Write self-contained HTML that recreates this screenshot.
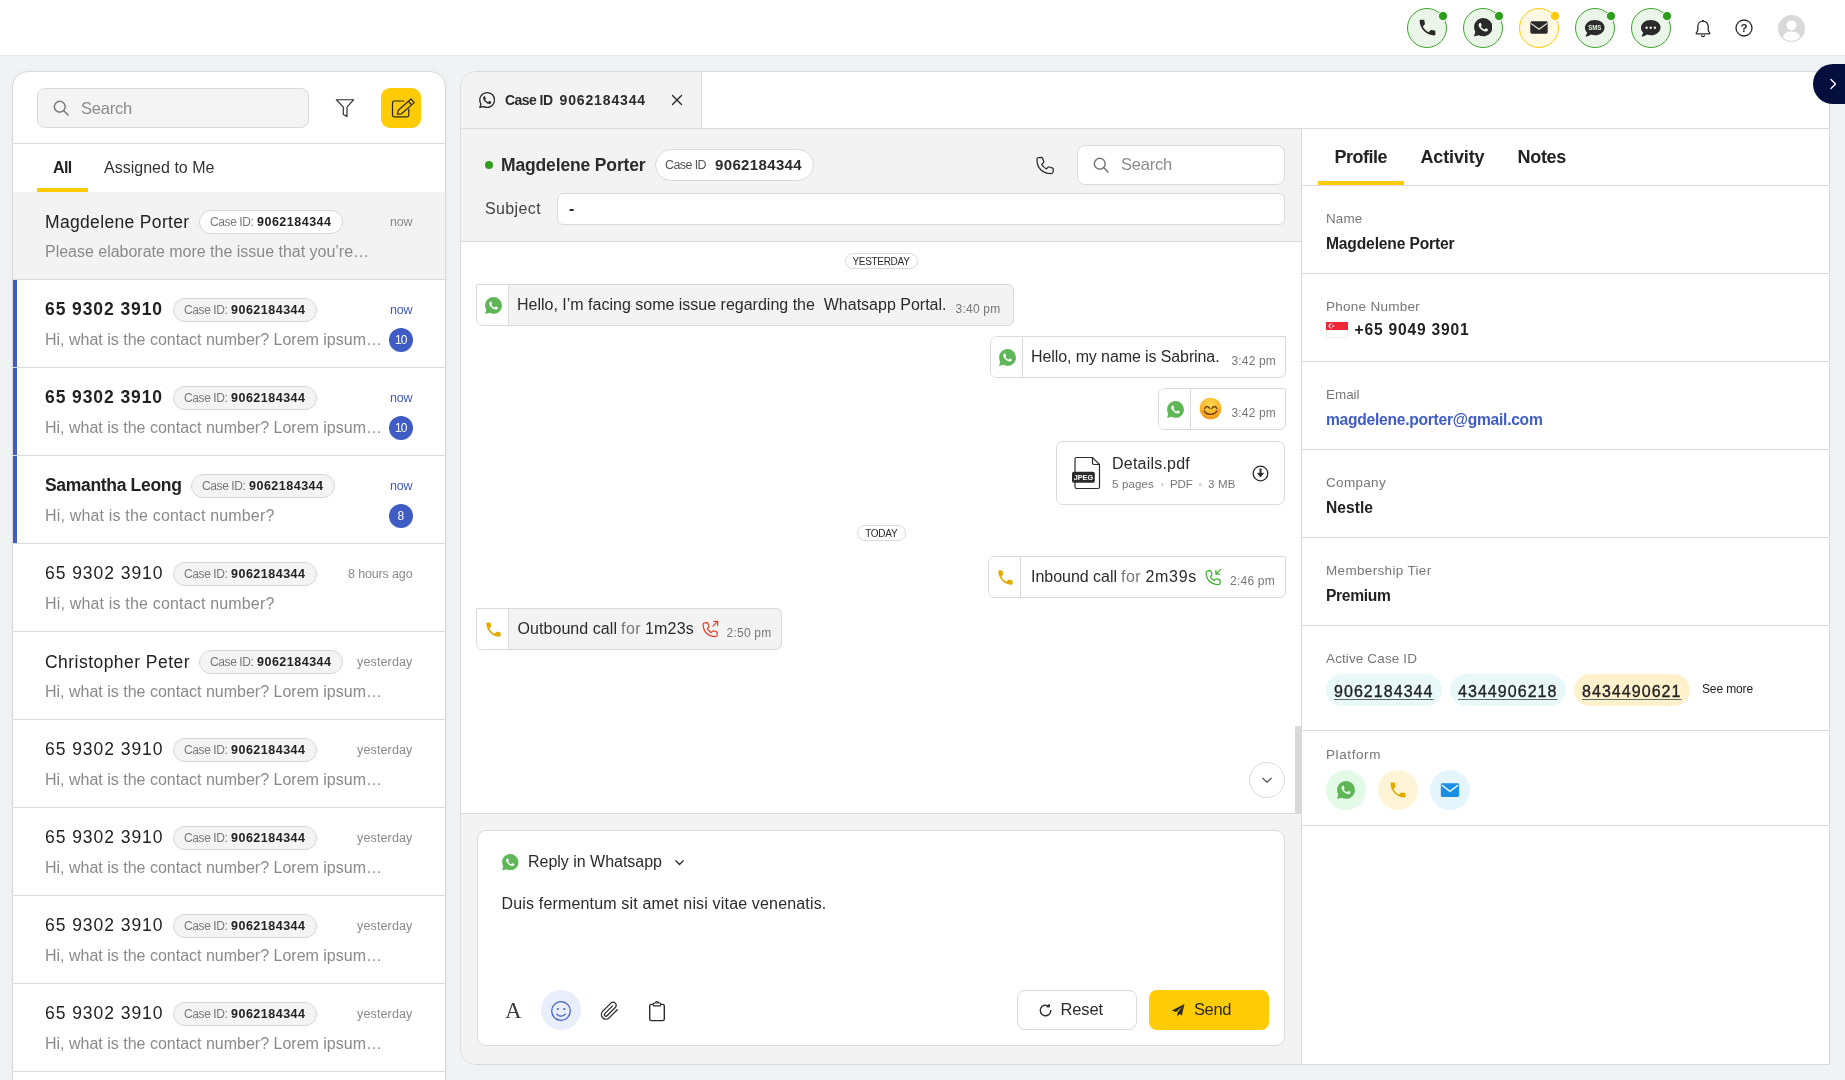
<!DOCTYPE html>
<html lang="en"><head><meta charset="utf-8"><title>Inbox</title><style>
*{box-sizing:border-box;margin:0;padding:0}
html,body{width:1845px;height:1080px;overflow:hidden}
body{background:#f1f2f4;font-family:"Liberation Sans",sans-serif;position:relative;color:#2b2b2b}
#app{position:absolute;left:0;top:0;width:1845px;height:1080px;will-change:transform}
.b{position:absolute;display:block}
.t{position:absolute;white-space:pre;line-height:1;display:block}
</style></head><body>
<div id="app">
<div class="b " style="left:0.00px;top:0.00px;width:1845.00px;height:56.00px;background:#fff;border-bottom:1px solid #e8e9eb"></div>
<div class="b " style="left:1407.00px;top:7.50px;width:40.00px;height:40.00px;border-radius:50%;border:1.2px solid #3aa62b;background:#ebf5e9"></div>
<svg class="b" style="left:1437.00px;top:9.60px;" width="12" height="12" viewBox="0 0 12 12" fill="none"><circle cx="6" cy="6" r="4.600" fill="#2f9e1e" stroke="#fff" stroke-width="1"/></svg>
<svg class="b" style="left:1416.50px;top:17.00px;" width="21" height="21" viewBox="0 0 24 24" fill="none"><path d="M6.62 10.79c1.44 2.83 3.76 5.14 6.59 6.59l2.2-2.2c.27-.27.67-.36 1.02-.24 1.12.37 2.33.57 3.57.57.55 0 1 .45 1 1V20c0 .55-.45 1-1 1-9.39 0-17-7.61-17-17 0-.55.45-1 1-1h3.5c.55 0 1 .45 1 1 0 1.25.2 2.45.57 3.57.11.35.03.74-.25 1.02l-2.2 2.2z" fill="#2a2a2a"/></svg>
<div class="b " style="left:1463.00px;top:7.50px;width:40.00px;height:40.00px;border-radius:50%;border:1.2px solid #3aa62b;background:#ebf5e9"></div>
<svg class="b" style="left:1493.00px;top:9.60px;" width="12" height="12" viewBox="0 0 12 12" fill="none"><circle cx="6" cy="6" r="4.600" fill="#2f9e1e" stroke="#fff" stroke-width="1"/></svg>
<svg class="b" style="left:1473.80px;top:18.00px;" width="18.5" height="18.5" viewBox="0 0 24 24" fill="none"><path d="M.057 24l1.688-6.163A11.867 11.867 0 01.157 11.892C.16 5.335 5.495 0 12.05 0a11.817 11.817 0 018.413 3.488 11.824 11.824 0 013.48 8.414c-.003 6.557-5.338 11.892-11.893 11.892a11.9 11.9 0 01-5.688-1.448L.057 24z" fill="#2a2a2a"/><path d="M17.472 14.382c-.297-.149-1.758-.867-2.03-.967-.273-.099-.471-.148-.67.15-.197.297-.767.966-.94 1.164-.173.199-.347.223-.644.075-.297-.15-1.255-.463-2.39-1.475-.883-.788-1.48-1.761-1.653-2.059-.173-.297-.018-.458.13-.606.134-.133.298-.347.446-.52.149-.174.198-.298.298-.497.099-.198.05-.371-.025-.52-.075-.149-.669-1.612-.916-2.207-.242-.579-.487-.5-.669-.51-.173-.008-.371-.01-.57-.01-.198 0-.52.074-.792.372-.272.297-1.04 1.016-1.04 2.479 0 1.462 1.065 2.875 1.213 3.074.149.198 2.096 3.2 5.077 4.487.709.306 1.262.489 1.694.625.712.227 1.36.195 1.871.118.571-.085 1.758-.719 2.006-1.413.248-.694.248-1.289.173-1.413-.074-.124-.272-.198-.57-.347z" fill="#ebf5e9"/></svg>
<div class="b " style="left:1519.00px;top:7.50px;width:40.00px;height:40.00px;border-radius:50%;border:1.2px solid #ffcb05;background:#fff8e3"></div>
<svg class="b" style="left:1549.00px;top:9.60px;" width="12" height="12" viewBox="0 0 12 12" fill="none"><circle cx="6" cy="6" r="4.600" fill="#ffcb05" stroke="#fff" stroke-width="1"/></svg>
<svg class="b" style="left:1530.00px;top:21.30px;" width="18" height="13" viewBox="0 0 18 13" fill="none"><rect x=".3" y=".3" width="17.400" height="12.400" rx="1.600" fill="#2a2a2a"/><path d="M1.200 2.600L9 8.200l7.800-5.600" stroke="#fff8e3" stroke-width="1.100" stroke-linecap="round" stroke-linejoin="round"/></svg>
<div class="b " style="left:1575.00px;top:7.50px;width:40.00px;height:40.00px;border-radius:50%;border:1.2px solid #3aa62b;background:#ebf5e9"></div>
<svg class="b" style="left:1605.00px;top:9.60px;" width="12" height="12" viewBox="0 0 12 12" fill="none"><circle cx="6" cy="6" r="4.600" fill="#2f9e1e" stroke="#fff" stroke-width="1"/></svg>
<svg class="b" style="left:1583.00px;top:16.50px;" width="23.5" height="23.5" viewBox="0 0 24 24" fill="none"><path d="M12 3C6.5 3 2 6.6 2 11c0 1.9.85 3.65 2.25 5-.5 1.700-1.600 3.200-1.650 3.250-.1.100-.130.270-.070.400.060.140.200.220.350.220 2.500 0 4.400-1.200 5.300-1.900 1.200.400 2.500.650 3.850.650 5.500 0 10-3.600 10-8S17.500 3 12 3z" fill="#2a2a2a"/><text x="12.100" y="13.700" text-anchor="middle" textLength="13.400" lengthAdjust="spacingAndGlyphs" font-family="Liberation Sans, sans-serif" font-weight="700" font-size="7.400" fill="#ebf5e9">SMS</text></svg>
<div class="b " style="left:1631.00px;top:7.50px;width:40.00px;height:40.00px;border-radius:50%;border:1.2px solid #3aa62b;background:#ebf5e9"></div>
<svg class="b" style="left:1661.00px;top:9.60px;" width="12" height="12" viewBox="0 0 12 12" fill="none"><circle cx="6" cy="6" r="4.600" fill="#2f9e1e" stroke="#fff" stroke-width="1"/></svg>
<svg class="b" style="left:1639.00px;top:16.50px;" width="23.5" height="23.5" viewBox="0 0 24 24" fill="none"><path d="M12 3C6.5 3 2 6.6 2 11c0 1.9.85 3.65 2.25 5-.5 1.700-1.600 3.200-1.650 3.250-.1.100-.130.270-.070.400.060.140.200.220.350.220 2.500 0 4.400-1.200 5.300-1.900 1.200.400 2.500.650 3.850.650 5.500 0 10-3.600 10-8S17.500 3 12 3z" fill="#2a2a2a"/><circle cx="7.800" cy="11" r="1.200" fill="#ebf5e9"/><circle cx="12" cy="11" r="1.200" fill="#ebf5e9"/><circle cx="16.200" cy="11" r="1.200" fill="#ebf5e9"/></svg>
<svg class="b" style="left:1693.00px;top:18.70px;" width="20" height="20" viewBox="0 0 20 20" fill="none"><path d="M10 2.2c-3 0-5.2 2.3-5.2 5.3v3.3c0 1.2-.6 2.2-1.5 3.100-.3.3-.1.9.4.9h12.600c.5 0 .7-.6.4-.9-.9-.9-1.500-1.900-1.500-3.100V7.500c0-3-2.200-5.300-5.200-5.300z" stroke="#2a2a2a" stroke-width="1.3" stroke-linejoin="round"/><path d="M8.600 16.600c.2.700.7 1.100 1.400 1.100s1.200-.4 1.400-1.100" stroke="#2a2a2a" stroke-width="1.300" stroke-linecap="round"/><path d="M10 1.300v1" stroke="#2a2a2a" stroke-width="1.300" stroke-linecap="round"/></svg>
<svg class="b" style="left:1734.00px;top:18.00px;" width="20" height="20" viewBox="0 0 20 20" fill="none"><circle cx="10" cy="10" r="8" stroke="#2a2a2a" stroke-width="1.3"/><text x="10" y="14.3" text-anchor="middle" font-family="Liberation Sans, sans-serif" font-size="11.500" font-weight="700" fill="#2a2a2a">?</text></svg>
<svg class="b" style="left:1777.50px;top:14.50px;" width="27" height="27" viewBox="0 0 27 27" fill="none"><defs><clipPath id="av"><circle cx="13.5" cy="13.5" r="13.5"/></clipPath></defs><circle cx="13.5" cy="13.5" r="13.5" fill="#d9d9d9"/><g clip-path="url(#av)" fill="#fff"><circle cx="13.5" cy="10.300" r="4.900"/><ellipse cx="13.5" cy="21.200" rx="8.200" ry="4.600"/></g></svg>
<div class="b " style="left:12.00px;top:71.00px;width:434.00px;height:1030.00px;background:#fff;border:1px solid #dadada;border-radius:16px 16px 0 0;box-shadow:0 0 5px rgba(0,0,0,.04)"></div>
<div class="b " style="left:37.00px;top:88.00px;width:272.00px;height:40.00px;background:#f4f4f4;border:1px solid #dadada;border-radius:8px"></div>
<svg class="b" style="left:51.00px;top:98.00px;" width="20" height="20" viewBox="0 0 24 24" fill="none"><circle cx="10.5" cy="10.5" r="6.5" stroke="#777" stroke-width="1.8"/><path d="M15.3 15.3L20.5 20.5" stroke="#777" stroke-width="1.8" stroke-linecap="round"/></svg>
<span class="t " style="left:81.00px;top:100.00px;font-size:16.50px;font-weight:400;color:#8b8b8b;letter-spacing:-0.214px;">Search</span>
<svg class="b" style="left:335.00px;top:98.00px;" width="20" height="20" viewBox="0 0 20 20" fill="none"><path d="M1.300 1.700h17.400L12 9.200v9.300l-3.700-2V9.200z" stroke="#2a2a2a" stroke-width="1.150" stroke-linejoin="round"/></svg>
<div class="b " style="left:381.00px;top:88.00px;width:40.00px;height:40.00px;background:#ffcb05;border-radius:9px"></div>
<svg class="b" style="left:389.00px;top:96.50px;" width="27" height="24" viewBox="0 0 27 24" fill="none"><path d="M14.900 4H5.200a1.700 1.700 0 00-1.700 1.700v12.500a1.700 1.700 0 001.700 1.700h12.900a1.700 1.700 0 001.700-1.700V12" stroke="#2a2a2a" stroke-width="1.200" stroke-linecap="round"/><path d="M8.400 17.200L9.300 13.200 22 2 25.200 5.600 12.500 16.800z" stroke="#2a2a2a" stroke-width="1.200" stroke-linejoin="round" fill="#ffcb05"/><path d="M19.600 4.500L22.400 7.700" stroke="#2a2a2a" stroke-width="1.200"/></svg>
<div class="b " style="left:13.00px;top:143.00px;width:432.00px;height:1.00px;background:#dadada"></div>
<span class="t " style="left:53.00px;top:160.00px;font-size:16.00px;font-weight:700;color:#222;letter-spacing:-0.651px;">All</span>
<span class="t " style="left:104.00px;top:160.00px;font-size:16.00px;font-weight:400;color:#333;letter-spacing:0.016px;">Assigned to Me</span>
<div class="b " style="left:37.00px;top:188.00px;width:51.00px;height:4.00px;background:#ffcb05"></div>
<div class="b " style="left:13.00px;top:192.00px;width:432.00px;height:87.00px;background:#f3f3f3"></div>
<div class="b " style="left:13.00px;top:279.00px;width:432.00px;height:1.00px;background:#dadada"></div>
<span class="t " style="left:45.00px;top:214.00px;font-size:17.50px;font-weight:400;color:#222;letter-spacing:0.336px;">Magdelene Porter</span>
<div class="b " style="left:199.00px;top:210.00px;width:144.00px;height:24.00px;border-radius:12px;border:1px solid #d6d6d6;background:#fff"></div>
<span class="t " style="left:210.00px;top:216.00px;font-size:12.00px;font-weight:400;color:#777;letter-spacing:-0.398px;">Case ID:</span>
<span class="t " style="left:257.00px;top:216.00px;font-size:12.50px;font-weight:700;color:#222;letter-spacing:0.497px;">9062184344</span>
<span class="t " style="left:390.00px;top:216.00px;font-size:12.50px;font-weight:400;color:#8a8a8a;letter-spacing:-0.146px;">now</span>
<span class="t " style="left:45.00px;top:244.00px;font-size:16.00px;font-weight:400;color:#8a8a8a;letter-spacing:-0.014px;">Please elaborate more the issue that you’re…</span>
<div class="b " style="left:13.00px;top:367.00px;width:432.00px;height:1.00px;background:#dadada"></div>
<div class="b " style="left:13.00px;top:280.00px;width:4.00px;height:87.00px;background:#3f5bc4"></div>
<span class="t " style="left:45.00px;top:301.00px;font-size:17.50px;font-weight:700;color:#222;letter-spacing:0.911px;">65 9302 3910</span>
<div class="b " style="left:173.00px;top:298.00px;width:144.00px;height:24.00px;border-radius:12px;border:1px solid #d6d6d6;background:#f4f4f4"></div>
<span class="t " style="left:184.00px;top:304.00px;font-size:12.00px;font-weight:400;color:#777;letter-spacing:-0.398px;">Case ID:</span>
<span class="t " style="left:231.00px;top:304.00px;font-size:12.50px;font-weight:700;color:#222;letter-spacing:0.497px;">9062184344</span>
<span class="t " style="left:390.00px;top:304.00px;font-size:12.50px;font-weight:400;color:#3f5bc4;letter-spacing:-0.146px;">now</span>
<span class="t " style="left:45.00px;top:332.00px;font-size:16.00px;font-weight:400;color:#8a8a8a;letter-spacing:-0.001px;">Hi, what is the contact number? Lorem ipsum…</span>
<div class="b " style="left:389.00px;top:328.00px;width:24.00px;height:24.00px;border-radius:50%;background:#3f5bc4"></div>
<span class="t " style="left:394.95px;top:334.00px;font-size:12.00px;font-weight:400;color:#fff;letter-spacing:-0.930px;">10</span>
<div class="b " style="left:13.00px;top:455.00px;width:432.00px;height:1.00px;background:#dadada"></div>
<div class="b " style="left:13.00px;top:368.00px;width:4.00px;height:87.00px;background:#3f5bc4"></div>
<span class="t " style="left:45.00px;top:389.00px;font-size:17.50px;font-weight:700;color:#222;letter-spacing:0.911px;">65 9302 3910</span>
<div class="b " style="left:173.00px;top:386.00px;width:144.00px;height:24.00px;border-radius:12px;border:1px solid #d6d6d6;background:#f4f4f4"></div>
<span class="t " style="left:184.00px;top:392.00px;font-size:12.00px;font-weight:400;color:#777;letter-spacing:-0.398px;">Case ID:</span>
<span class="t " style="left:231.00px;top:392.00px;font-size:12.50px;font-weight:700;color:#222;letter-spacing:0.497px;">9062184344</span>
<span class="t " style="left:390.00px;top:392.00px;font-size:12.50px;font-weight:400;color:#3f5bc4;letter-spacing:-0.146px;">now</span>
<span class="t " style="left:45.00px;top:420.00px;font-size:16.00px;font-weight:400;color:#8a8a8a;letter-spacing:-0.001px;">Hi, what is the contact number? Lorem ipsum…</span>
<div class="b " style="left:389.00px;top:416.00px;width:24.00px;height:24.00px;border-radius:50%;background:#3f5bc4"></div>
<span class="t " style="left:394.95px;top:422.00px;font-size:12.00px;font-weight:400;color:#fff;letter-spacing:-0.930px;">10</span>
<div class="b " style="left:13.00px;top:543.00px;width:432.00px;height:1.00px;background:#dadada"></div>
<div class="b " style="left:13.00px;top:456.00px;width:4.00px;height:87.00px;background:#3f5bc4"></div>
<span class="t " style="left:45.00px;top:477.00px;font-size:17.50px;font-weight:700;color:#222;letter-spacing:-0.321px;">Samantha Leong</span>
<div class="b " style="left:191.00px;top:474.00px;width:144.00px;height:24.00px;border-radius:12px;border:1px solid #d6d6d6;background:#f4f4f4"></div>
<span class="t " style="left:202.00px;top:480.00px;font-size:12.00px;font-weight:400;color:#777;letter-spacing:-0.398px;">Case ID:</span>
<span class="t " style="left:249.00px;top:480.00px;font-size:12.50px;font-weight:700;color:#222;letter-spacing:0.497px;">9062184344</span>
<span class="t " style="left:390.00px;top:480.00px;font-size:12.50px;font-weight:400;color:#3f5bc4;letter-spacing:-0.146px;">now</span>
<span class="t " style="left:45.00px;top:508.00px;font-size:16.00px;font-weight:400;color:#8a8a8a;letter-spacing:0.174px;">Hi, what is the contact number?</span>
<div class="b " style="left:389.00px;top:504.00px;width:24.00px;height:24.00px;border-radius:50%;background:#3f5bc4"></div>
<span class="t " style="left:397.45px;top:510.00px;font-size:12.00px;font-weight:400;color:#fff;letter-spacing:-0.188px;">8</span>
<div class="b " style="left:13.00px;top:631.00px;width:432.00px;height:1.00px;background:#dadada"></div>
<span class="t " style="left:45.00px;top:565.00px;font-size:17.50px;font-weight:400;color:#222;letter-spacing:0.953px;">65 9302 3910</span>
<div class="b " style="left:173.00px;top:562.00px;width:144.00px;height:24.00px;border-radius:12px;border:1px solid #d6d6d6;background:#f4f4f4"></div>
<span class="t " style="left:184.00px;top:568.00px;font-size:12.00px;font-weight:400;color:#777;letter-spacing:-0.398px;">Case ID:</span>
<span class="t " style="left:231.00px;top:568.00px;font-size:12.50px;font-weight:700;color:#222;letter-spacing:0.497px;">9062184344</span>
<span class="t " style="left:348.00px;top:568.00px;font-size:12.50px;font-weight:400;color:#8a8a8a;letter-spacing:-0.139px;">8 hours ago</span>
<span class="t " style="left:45.00px;top:596.00px;font-size:16.00px;font-weight:400;color:#8a8a8a;letter-spacing:0.174px;">Hi, what is the contact number?</span>
<div class="b " style="left:13.00px;top:719.00px;width:432.00px;height:1.00px;background:#dadada"></div>
<span class="t " style="left:45.00px;top:654.00px;font-size:17.50px;font-weight:400;color:#222;letter-spacing:0.461px;">Christopher Peter</span>
<div class="b " style="left:199.00px;top:650.00px;width:144.00px;height:24.00px;border-radius:12px;border:1px solid #d6d6d6;background:#f4f4f4"></div>
<span class="t " style="left:210.00px;top:656.00px;font-size:12.00px;font-weight:400;color:#777;letter-spacing:-0.398px;">Case ID:</span>
<span class="t " style="left:257.00px;top:656.00px;font-size:12.50px;font-weight:700;color:#222;letter-spacing:0.497px;">9062184344</span>
<span class="t " style="left:357.00px;top:656.00px;font-size:12.50px;font-weight:400;color:#8a8a8a;letter-spacing:0.144px;">yesterday</span>
<span class="t " style="left:45.00px;top:684.00px;font-size:16.00px;font-weight:400;color:#8a8a8a;letter-spacing:-0.001px;">Hi, what is the contact number? Lorem ipsum…</span>
<div class="b " style="left:13.00px;top:807.00px;width:432.00px;height:1.00px;background:#dadada"></div>
<span class="t " style="left:45.00px;top:741.00px;font-size:17.50px;font-weight:400;color:#222;letter-spacing:0.953px;">65 9302 3910</span>
<div class="b " style="left:173.00px;top:738.00px;width:144.00px;height:24.00px;border-radius:12px;border:1px solid #d6d6d6;background:#f4f4f4"></div>
<span class="t " style="left:184.00px;top:744.00px;font-size:12.00px;font-weight:400;color:#777;letter-spacing:-0.398px;">Case ID:</span>
<span class="t " style="left:231.00px;top:744.00px;font-size:12.50px;font-weight:700;color:#222;letter-spacing:0.497px;">9062184344</span>
<span class="t " style="left:357.00px;top:744.00px;font-size:12.50px;font-weight:400;color:#8a8a8a;letter-spacing:0.144px;">yesterday</span>
<span class="t " style="left:45.00px;top:772.00px;font-size:16.00px;font-weight:400;color:#8a8a8a;letter-spacing:-0.001px;">Hi, what is the contact number? Lorem ipsum…</span>
<div class="b " style="left:13.00px;top:895.00px;width:432.00px;height:1.00px;background:#dadada"></div>
<span class="t " style="left:45.00px;top:829.00px;font-size:17.50px;font-weight:400;color:#222;letter-spacing:0.953px;">65 9302 3910</span>
<div class="b " style="left:173.00px;top:826.00px;width:144.00px;height:24.00px;border-radius:12px;border:1px solid #d6d6d6;background:#f4f4f4"></div>
<span class="t " style="left:184.00px;top:832.00px;font-size:12.00px;font-weight:400;color:#777;letter-spacing:-0.398px;">Case ID:</span>
<span class="t " style="left:231.00px;top:832.00px;font-size:12.50px;font-weight:700;color:#222;letter-spacing:0.497px;">9062184344</span>
<span class="t " style="left:357.00px;top:832.00px;font-size:12.50px;font-weight:400;color:#8a8a8a;letter-spacing:0.144px;">yesterday</span>
<span class="t " style="left:45.00px;top:860.00px;font-size:16.00px;font-weight:400;color:#8a8a8a;letter-spacing:-0.001px;">Hi, what is the contact number? Lorem ipsum…</span>
<div class="b " style="left:13.00px;top:983.00px;width:432.00px;height:1.00px;background:#dadada"></div>
<span class="t " style="left:45.00px;top:917.00px;font-size:17.50px;font-weight:400;color:#222;letter-spacing:0.953px;">65 9302 3910</span>
<div class="b " style="left:173.00px;top:914.00px;width:144.00px;height:24.00px;border-radius:12px;border:1px solid #d6d6d6;background:#f4f4f4"></div>
<span class="t " style="left:184.00px;top:920.00px;font-size:12.00px;font-weight:400;color:#777;letter-spacing:-0.398px;">Case ID:</span>
<span class="t " style="left:231.00px;top:920.00px;font-size:12.50px;font-weight:700;color:#222;letter-spacing:0.497px;">9062184344</span>
<span class="t " style="left:357.00px;top:920.00px;font-size:12.50px;font-weight:400;color:#8a8a8a;letter-spacing:0.144px;">yesterday</span>
<span class="t " style="left:45.00px;top:948.00px;font-size:16.00px;font-weight:400;color:#8a8a8a;letter-spacing:-0.001px;">Hi, what is the contact number? Lorem ipsum…</span>
<div class="b " style="left:13.00px;top:1071.00px;width:432.00px;height:1.00px;background:#dadada"></div>
<span class="t " style="left:45.00px;top:1005.00px;font-size:17.50px;font-weight:400;color:#222;letter-spacing:0.953px;">65 9302 3910</span>
<div class="b " style="left:173.00px;top:1002.00px;width:144.00px;height:24.00px;border-radius:12px;border:1px solid #d6d6d6;background:#f4f4f4"></div>
<span class="t " style="left:184.00px;top:1008.00px;font-size:12.00px;font-weight:400;color:#777;letter-spacing:-0.398px;">Case ID:</span>
<span class="t " style="left:231.00px;top:1008.00px;font-size:12.50px;font-weight:700;color:#222;letter-spacing:0.497px;">9062184344</span>
<span class="t " style="left:357.00px;top:1008.00px;font-size:12.50px;font-weight:400;color:#8a8a8a;letter-spacing:0.144px;">yesterday</span>
<span class="t " style="left:45.00px;top:1036.00px;font-size:16.00px;font-weight:400;color:#8a8a8a;letter-spacing:-0.001px;">Hi, what is the contact number? Lorem ipsum…</span>
<div class="b " style="left:460.00px;top:71.00px;width:1370.00px;height:994.00px;background:#fff;border:1px solid #dadada;border-radius:16px 0 0 16px;overflow:hidden"><div class="b " style="left:0.00px;top:0.00px;width:241.00px;height:56.00px;background:#f3f3f3;border-right:1px solid #dadada"></div><div class="b " style="left:0.00px;top:56.00px;width:1368.00px;height:1.00px;background:#dadada"></div><div class="b " style="left:0.00px;top:57.00px;width:840.00px;height:112.00px;background:#f3f3f3"></div><div class="b " style="left:0.00px;top:169.00px;width:840.00px;height:1.00px;background:#dadada"></div><div class="b " style="left:0.00px;top:741.00px;width:840.00px;height:1.00px;background:#dadada"></div><div class="b " style="left:0.00px;top:742.00px;width:840.00px;height:260.00px;background:#f3f3f3"></div><div class="b " style="left:840.00px;top:57.00px;width:1.00px;height:940.00px;background:#dadada"></div></div>
<svg class="b" style="left:479.00px;top:92.00px;" width="16.3" height="16.3" viewBox="0 0 24 24" fill="none"><path fill-rule="evenodd" d="M.057 24l1.688-6.163A11.867 11.867 0 01.157 11.892C.16 5.335 5.495 0 12.05 0a11.817 11.817 0 018.413 3.488 11.824 11.824 0 013.48 8.414c-.003 6.557-5.338 11.892-11.893 11.892a11.9 11.9 0 01-5.688-1.448L.057 24z M12.051 21.785h-.004a9.87 9.87 0 01-5.031-1.378l-.361-.214-3.741.982.998-3.648-.235-.374a9.86 9.86 0 01-1.51-5.26c.001-5.45 4.436-9.884 9.888-9.884 2.64 0 5.122 1.03 6.988 2.898a9.825 9.825 0 012.893 6.994c-.003 5.45-4.437 9.884-9.885 9.884z" fill="#2b2b2b"/><path d="M17.472 14.382c-.297-.149-1.758-.867-2.03-.967-.273-.099-.471-.148-.67.15-.197.297-.767.966-.94 1.164-.173.199-.347.223-.644.075-.297-.15-1.255-.463-2.39-1.475-.883-.788-1.48-1.761-1.653-2.059-.173-.297-.018-.458.13-.606.134-.133.298-.347.446-.52.149-.174.198-.298.298-.497.099-.198.05-.371-.025-.52-.075-.149-.669-1.612-.916-2.207-.242-.579-.487-.5-.669-.51-.173-.008-.371-.01-.57-.01-.198 0-.52.074-.792.372-.272.297-1.04 1.016-1.04 2.479 0 1.462 1.065 2.875 1.213 3.074.149.198 2.096 3.2 5.077 4.487.709.306 1.262.489 1.694.625.712.227 1.36.195 1.871.118.571-.085 1.758-.719 2.006-1.413.248-.694.248-1.289.173-1.413-.074-.124-.272-.198-.57-.347z" fill="#2b2b2b"/></svg>
<span class="t " style="left:505.00px;top:93.00px;font-size:14.00px;font-weight:700;color:#2b2b2b;letter-spacing:-0.551px;">Case ID</span>
<span class="t " style="left:559.50px;top:93.00px;font-size:14.00px;font-weight:700;color:#2b2b2b;letter-spacing:0.863px;">9062184344</span>
<svg class="b" style="left:671.00px;top:94.00px;" width="12" height="12" viewBox="0 0 12 12" fill="none"><path d="M1.500 1.500l9 9M10.500 1.500l-9 9" stroke="#2b2b2b" stroke-width="1.400" stroke-linecap="round"/></svg>
<div class="b " style="left:485.00px;top:161.00px;width:8.00px;height:8.00px;border-radius:50%;background:#2f9e1e"></div>
<span class="t " style="left:501.00px;top:157.00px;font-size:17.50px;font-weight:700;color:#2b2b2b;letter-spacing:-0.147px;">Magdelene Porter</span>
<div class="b " style="left:654.50px;top:149.00px;width:159.00px;height:32.00px;border-radius:16px;border:1px solid #dadada;background:#fff"></div>
<span class="t " style="left:665.00px;top:159.00px;font-size:12.50px;font-weight:400;color:#555;letter-spacing:-0.594px;">Case ID</span>
<span class="t " style="left:715.00px;top:157.00px;font-size:15.00px;font-weight:700;color:#2b2b2b;letter-spacing:0.356px;">9062184344</span>
<svg class="b" style="left:1034.00px;top:154.00px;" width="22" height="22" viewBox="0 0 20 20" fill="none"><path d="M5.200 1.800l2.400-.300c.5 0 .9.200 1.100.700l1.100 3c.2.500 0 1-.3 1.300L8 7.900c.9 1.900 2.300 3.300 4.200 4.200l1.400-1.500c.3-.4.800-.5 1.300-.3l3 1.100c.5.200.7.600.7 1.100l-.3 2.400c-.100.800-.800 1.400-1.600 1.400C8.600 16.300 3.700 11.400 3.700 3.400c0-.8.600-1.500 1.500-1.600z" stroke="#2b2b2b" stroke-width="1.150" stroke-linejoin="round" transform="translate(-1,1.5)"/></svg>
<div class="b " style="left:1077.00px;top:145.00px;width:208.00px;height:40.00px;background:#fff;border:1px solid #dadada;border-radius:8px"></div>
<svg class="b" style="left:1091.00px;top:155.00px;" width="20" height="20" viewBox="0 0 24 24" fill="none"><circle cx="10.5" cy="10.5" r="6.5" stroke="#777" stroke-width="1.8"/><path d="M15.3 15.3L20.5 20.5" stroke="#777" stroke-width="1.8" stroke-linecap="round"/></svg>
<span class="t " style="left:1121.00px;top:156.00px;font-size:16.50px;font-weight:400;color:#8b8b8b;letter-spacing:-0.214px;">Search</span>
<span class="t " style="left:485.00px;top:201.00px;font-size:16.00px;font-weight:400;color:#444;letter-spacing:0.375px;">Subject</span>
<div class="b " style="left:557.00px;top:193.00px;width:728.00px;height:32.00px;background:#fff;border:1px solid #dadada;border-radius:6px"></div>
<span class="t " style="left:569.00px;top:201.00px;font-size:16.00px;font-weight:700;color:#2b2b2b;letter-spacing:0.672px;">-</span>
<div class="b " style="left:844.50px;top:252.50px;width:73.00px;height:16.50px;border-radius:9px;border:1px solid #dadada;background:#fff"></div>
<span class="t " style="left:852.50px;top:257.00px;font-size:10.00px;font-weight:400;color:#2b2b2b;letter-spacing:-0.316px;">YESTERDAY</span>
<div class="b " style="left:857.00px;top:524.50px;width:48.50px;height:16.50px;border-radius:9px;border:1px solid #dadada;background:#fff"></div>
<span class="t " style="left:865.25px;top:529.00px;font-size:10.00px;font-weight:400;color:#2b2b2b;letter-spacing:-0.306px;">TODAY</span>
<div class="b " style="left:476.00px;top:284.00px;width:538.00px;height:42.00px;border:1px solid #dadada;border-radius:1px 6px 6px 7px;background:#f3f3f3;overflow:hidden"><div class="b " style="left:0.00px;top:0.00px;width:32.00px;height:40.00px;background:#fff;border-right:1px solid #dadada"></div></div>
<svg class="b" style="left:484.50px;top:296.50px;" width="17" height="17" viewBox="0 0 24 24" fill="none"><path d="M.057 24l1.688-6.163A11.867 11.867 0 01.157 11.892C.16 5.335 5.495 0 12.05 0a11.817 11.817 0 018.413 3.488 11.824 11.824 0 013.48 8.414c-.003 6.557-5.338 11.892-11.893 11.892a11.9 11.9 0 01-5.688-1.448L.057 24z" fill="#5fb657"/><path d="M17.472 14.382c-.297-.149-1.758-.867-2.03-.967-.273-.099-.471-.148-.67.15-.197.297-.767.966-.94 1.164-.173.199-.347.223-.644.075-.297-.15-1.255-.463-2.39-1.475-.883-.788-1.48-1.761-1.653-2.059-.173-.297-.018-.458.13-.606.134-.133.298-.347.446-.52.149-.174.198-.298.298-.497.099-.198.05-.371-.025-.52-.075-.149-.669-1.612-.916-2.207-.242-.579-.487-.5-.669-.51-.173-.008-.371-.01-.57-.01-.198 0-.52.074-.792.372-.272.297-1.04 1.016-1.04 2.479 0 1.462 1.065 2.875 1.213 3.074.149.198 2.096 3.2 5.077 4.487.709.306 1.262.489 1.694.625.712.227 1.36.195 1.871.118.571-.085 1.758-.719 2.006-1.413.248-.694.248-1.289.173-1.413-.074-.124-.272-.198-.57-.347z" fill="#fff"/></svg>
<span class="t " style="left:517.00px;top:297.00px;font-size:16.00px;font-weight:400;color:#2b2b2b;letter-spacing:-0.001px;">Hello, I’m facing some issue regarding the  Whatsapp Portal.</span>
<span class="t " style="left:955.50px;top:303.00px;font-size:12.00px;font-weight:400;color:#777;letter-spacing:0.234px;">3:40 pm</span>
<div class="b " style="left:990.00px;top:336.00px;width:296.00px;height:42.00px;border:1px solid #dadada;border-radius:7px 0 6px 7px;background:#fff;overflow:hidden"><div class="b " style="left:0.00px;top:0.00px;width:32.00px;height:40.00px;background:#fff;border-right:1px solid #dadada"></div></div>
<svg class="b" style="left:998.50px;top:348.50px;" width="17" height="17" viewBox="0 0 24 24" fill="none"><path d="M.057 24l1.688-6.163A11.867 11.867 0 01.157 11.892C.16 5.335 5.495 0 12.05 0a11.817 11.817 0 018.413 3.488 11.824 11.824 0 013.48 8.414c-.003 6.557-5.338 11.892-11.893 11.892a11.9 11.9 0 01-5.688-1.448L.057 24z" fill="#5fb657"/><path d="M17.472 14.382c-.297-.149-1.758-.867-2.03-.967-.273-.099-.471-.148-.67.15-.197.297-.767.966-.94 1.164-.173.199-.347.223-.644.075-.297-.15-1.255-.463-2.39-1.475-.883-.788-1.48-1.761-1.653-2.059-.173-.297-.018-.458.13-.606.134-.133.298-.347.446-.52.149-.174.198-.298.298-.497.099-.198.05-.371-.025-.52-.075-.149-.669-1.612-.916-2.207-.242-.579-.487-.5-.669-.51-.173-.008-.371-.01-.57-.01-.198 0-.52.074-.792.372-.272.297-1.04 1.016-1.04 2.479 0 1.462 1.065 2.875 1.213 3.074.149.198 2.096 3.2 5.077 4.487.709.306 1.262.489 1.694.625.712.227 1.36.195 1.871.118.571-.085 1.758-.719 2.006-1.413.248-.694.248-1.289.173-1.413-.074-.124-.272-.198-.57-.347z" fill="#fff"/></svg>
<span class="t " style="left:1031.00px;top:349.00px;font-size:16.00px;font-weight:400;color:#2b2b2b;letter-spacing:-0.103px;">Hello, my name is Sabrina.</span>
<span class="t " style="left:1231.50px;top:355.00px;font-size:12.00px;font-weight:400;color:#777;letter-spacing:0.163px;">3:42 pm</span>
<div class="b " style="left:1158.00px;top:388.00px;width:128.00px;height:42.00px;border:1px solid #dadada;border-radius:7px 0 6px 7px;background:#fff;overflow:hidden"><div class="b " style="left:0.00px;top:0.00px;width:32.00px;height:40.00px;background:#fff;border-right:1px solid #dadada"></div></div>
<svg class="b" style="left:1166.50px;top:400.50px;" width="17" height="17" viewBox="0 0 24 24" fill="none"><path d="M.057 24l1.688-6.163A11.867 11.867 0 01.157 11.892C.16 5.335 5.495 0 12.05 0a11.817 11.817 0 018.413 3.488 11.824 11.824 0 013.48 8.414c-.003 6.557-5.338 11.892-11.893 11.892a11.9 11.9 0 01-5.688-1.448L.057 24z" fill="#5fb657"/><path d="M17.472 14.382c-.297-.149-1.758-.867-2.03-.967-.273-.099-.471-.148-.67.15-.197.297-.767.966-.94 1.164-.173.199-.347.223-.644.075-.297-.15-1.255-.463-2.39-1.475-.883-.788-1.48-1.761-1.653-2.059-.173-.297-.018-.458.13-.606.134-.133.298-.347.446-.52.149-.174.198-.298.298-.497.099-.198.05-.371-.025-.52-.075-.149-.669-1.612-.916-2.207-.242-.579-.487-.5-.669-.51-.173-.008-.371-.01-.57-.01-.198 0-.52.074-.792.372-.272.297-1.04 1.016-1.04 2.479 0 1.462 1.065 2.875 1.213 3.074.149.198 2.096 3.2 5.077 4.487.709.306 1.262.489 1.694.625.712.227 1.36.195 1.871.118.571-.085 1.758-.719 2.006-1.413.248-.694.248-1.289.173-1.413-.074-.124-.272-.198-.57-.347z" fill="#fff"/></svg>
<svg class="b" style="left:1199.40px;top:397.10px;" width="23" height="23" viewBox="0 0 23 23" fill="none"><defs><radialGradient id="em" cx="50%" cy="30%" r="75%"><stop offset="0" stop-color="#ffd94d"/><stop offset=".6" stop-color="#fbb42b"/><stop offset="1" stop-color="#ee8d12"/></radialGradient></defs><circle cx="11.500" cy="11.500" r="10.800" fill="url(#em)"/><ellipse cx="5.300" cy="14" rx="2.100" ry="1.300" fill="#f26b3a" opacity=".35"/><ellipse cx="17.700" cy="14" rx="2.100" ry="1.300" fill="#f26b3a" opacity=".35"/><path d="M5.700 11.600c1-2.900 4-2.900 5 0M12.900 11.600c1-2.900 4-2.900 5 0" stroke="#6b3d10" stroke-width="1.400" stroke-linecap="round"/><path d="M5.300 14.100c1.600 4.300 10.800 4.300 12.400 0" stroke="#6b3d10" stroke-width="1.400" stroke-linecap="round"/></svg>
<span class="t " style="left:1231.50px;top:407.00px;font-size:12.00px;font-weight:400;color:#777;letter-spacing:0.163px;">3:42 pm</span>
<div class="b " style="left:1056.00px;top:441.00px;width:229.00px;height:64.00px;border:1px solid #dadada;border-radius:7px;background:#fff"></div>
<svg class="b" style="left:1072.00px;top:456.00px;" width="31" height="34" viewBox="0 0 31 34" fill="none"><path d="M4.500 1.500h16l7 7v22.500a1.500 1.500 0 01-1.500 1.500h-21.500a1.500 1.500 0 01-1.500-1.500v-28a1.500 1.500 0 011.500-1.500z" stroke="#2b2b2b" stroke-width="1.200" fill="#fff"/><path d="M20.500 1.500v5.500a1.500 1.500 0 001.500 1.500h5.500" stroke="#2b2b2b" stroke-width="1.200"/><rect x="0" y="15.800" width="22.800" height="10.900" rx="1.800" fill="#2b2b2b"/><text x="11.400" y="24" text-anchor="middle" textLength="19.500" lengthAdjust="spacingAndGlyphs" font-family="Liberation Sans, sans-serif" font-weight="700" font-size="7.800" fill="#fff">JPEG</text></svg>
<span class="t " style="left:1112.00px;top:456.00px;font-size:16.00px;font-weight:400;color:#2b2b2b;letter-spacing:0.219px;">Details.pdf</span>
<span class="t " style="left:1112.00px;top:479.00px;font-size:11.50px;font-weight:400;color:#777;letter-spacing:0.152px;">5 pages</span>
<span class="t " style="left:1160.70px;top:480.00px;font-size:10.00px;font-weight:400;color:#d0d0d0;">•</span>
<span class="t " style="left:1170.00px;top:479.00px;font-size:11.50px;font-weight:400;color:#777;letter-spacing:-0.167px;">PDF</span>
<span class="t " style="left:1198.50px;top:480.00px;font-size:10.00px;font-weight:400;color:#d0d0d0;">•</span>
<span class="t " style="left:1208.00px;top:479.00px;font-size:11.50px;font-weight:400;color:#777;letter-spacing:0.164px;">3 MB</span>
<svg class="b" style="left:1252.10px;top:464.60px;" width="17" height="17" viewBox="0 0 17 17" fill="none"><circle cx="8.500" cy="8.500" r="7.300" stroke="#2b2b2b" stroke-width="1.300"/><path d="M8.500 4.300v5" stroke="#2b2b2b" stroke-width="1.900" stroke-linecap="round"/><path d="M5.500 8.300h6L8.500 12z" fill="#2b2b2b" stroke="#2b2b2b" stroke-width=".800" stroke-linejoin="round"/></svg>
<div class="b " style="left:988.00px;top:556.00px;width:298.00px;height:42.00px;border:1px solid #dadada;border-radius:7px 0 6px 7px;background:#fff;overflow:hidden"><div class="b " style="left:0.00px;top:0.00px;width:32.00px;height:40.00px;background:#fff;border-right:1px solid #dadada"></div></div>
<svg class="b" style="left:995.50px;top:567.50px;" width="19" height="19" viewBox="0 0 24 24" fill="none"><path d="M6.62 10.79c1.44 2.83 3.76 5.14 6.59 6.59l2.2-2.2c.27-.27.67-.36 1.02-.24 1.12.37 2.33.57 3.57.57.55 0 1 .45 1 1V20c0 .55-.45 1-1 1-9.39 0-17-7.61-17-17 0-.55.45-1 1-1h3.5c.55 0 1 .45 1 1 0 1.25.2 2.45.57 3.57.11.35.03.74-.25 1.02l-2.2 2.2z" fill="#e0aa00"/></svg>
<span class="t " style="left:1031.00px;top:569.00px;font-size:16.00px;font-weight:400;color:#2b2b2b;letter-spacing:-0.025px;">Inbound call</span>
<span class="t " style="left:1121.00px;top:569.00px;font-size:16.00px;font-weight:400;color:#777;letter-spacing:0.443px;">for</span>
<span class="t " style="left:1145.50px;top:569.00px;font-size:16.00px;font-weight:400;color:#2b2b2b;letter-spacing:0.694px;">2m39s</span>
<svg class="b" style="left:1205.00px;top:567.00px;" width="19" height="19" viewBox="0 0 20 20" fill="none"><path d="M5.200 1.800l2.400-.300c.5 0 .9.200 1.100.700l1.100 3c.2.500 0 1-.3 1.300L8 7.900c.9 1.900 2.300 3.300 4.200 4.200l1.400-1.500c.3-.4.800-.5 1.300-.3l3 1.100c.5.200.7.600.7 1.100l-.3 2.400c-.100.800-.800 1.400-1.600 1.400C8.600 16.300 3.700 11.400 3.700 3.400c0-.8.600-1.500 1.500-1.600z" stroke="#3bb02c" stroke-width="1.300" stroke-linejoin="round" transform="translate(-2.5,2.200)"/><path d="M16.500 2.500l-5 5M11.500 3.500v4h4" stroke="#3bb02c" stroke-width="1.300" stroke-linecap="round" stroke-linejoin="round"/></svg>
<span class="t " style="left:1230.00px;top:575.00px;font-size:12.00px;font-weight:400;color:#777;letter-spacing:0.234px;">2:46 pm</span>
<div class="b " style="left:476.00px;top:608.00px;width:306.00px;height:42.00px;border:1px solid #dadada;border-radius:1px 6px 6px 7px;background:#f3f3f3;overflow:hidden"><div class="b " style="left:0.00px;top:0.00px;width:32.00px;height:40.00px;background:#fff;border-right:1px solid #dadada"></div></div>
<svg class="b" style="left:483.50px;top:619.50px;" width="19" height="19" viewBox="0 0 24 24" fill="none"><path d="M6.62 10.79c1.44 2.83 3.76 5.14 6.59 6.59l2.2-2.2c.27-.27.67-.36 1.02-.24 1.12.37 2.33.57 3.57.57.55 0 1 .45 1 1V20c0 .55-.45 1-1 1-9.39 0-17-7.61-17-17 0-.55.45-1 1-1h3.5c.55 0 1 .45 1 1 0 1.25.2 2.45.57 3.57.11.35.03.74-.25 1.02l-2.2 2.2z" fill="#e0aa00"/></svg>
<span class="t " style="left:517.50px;top:621.00px;font-size:16.00px;font-weight:400;color:#2b2b2b;letter-spacing:0.059px;">Outbound call</span>
<span class="t " style="left:621.00px;top:621.00px;font-size:16.00px;font-weight:400;color:#777;letter-spacing:0.443px;">for</span>
<span class="t " style="left:645.00px;top:621.00px;font-size:16.00px;font-weight:400;color:#2b2b2b;letter-spacing:0.194px;">1m23s</span>
<svg class="b" style="left:701.50px;top:619.00px;" width="19" height="19" viewBox="0 0 20 20" fill="none"><path d="M5.200 1.800l2.400-.300c.5 0 .9.200 1.100.700l1.100 3c.2.500 0 1-.3 1.300L8 7.900c.9 1.900 2.300 3.300 4.200 4.200l1.400-1.500c.3-.4.800-.5 1.300-.3l3 1.100c.5.200.7.600.7 1.100l-.3 2.400c-.100.800-.800 1.400-1.600 1.400C8.600 16.300 3.700 11.400 3.700 3.400c0-.8.600-1.500 1.500-1.600z" stroke="#d9452f" stroke-width="1.300" stroke-linejoin="round" transform="translate(-2.5,2.200)"/><path d="M11.500 7.500l5-5M12.500 2.500h4v4" stroke="#d9452f" stroke-width="1.300" stroke-linecap="round" stroke-linejoin="round"/></svg>
<span class="t " style="left:726.50px;top:627.00px;font-size:12.00px;font-weight:400;color:#777;letter-spacing:0.234px;">2:50 pm</span>
<div class="b " style="left:1249.00px;top:762.00px;width:36.00px;height:36.00px;border-radius:50%;border:1px solid #dadada;background:#fff"></div>
<svg class="b" style="left:1261.00px;top:774.30px;" width="12" height="12" viewBox="0 0 12 12" fill="none"><path d="M1.800 4.200L6 8.200l4.200-4" stroke="#5a5a5a" stroke-width="1.300" stroke-linecap="round" stroke-linejoin="round"/></svg>
<div class="b " style="left:1295.00px;top:726.00px;width:6.00px;height:87.00px;background:#d8d8d8"></div>
<div class="b " style="left:477.00px;top:830.00px;width:808.00px;height:216.00px;background:#fff;border:1px solid #dadada;border-radius:9px"></div>
<svg class="b" style="left:502.05px;top:853.90px;" width="16.5" height="16.5" viewBox="0 0 24 24" fill="none"><path d="M.057 24l1.688-6.163A11.867 11.867 0 01.157 11.892C.16 5.335 5.495 0 12.05 0a11.817 11.817 0 018.413 3.488 11.824 11.824 0 013.48 8.414c-.003 6.557-5.338 11.892-11.893 11.892a11.9 11.9 0 01-5.688-1.448L.057 24z" fill="#5fb657"/><path d="M17.472 14.382c-.297-.149-1.758-.867-2.03-.967-.273-.099-.471-.148-.67.15-.197.297-.767.966-.94 1.164-.173.199-.347.223-.644.075-.297-.15-1.255-.463-2.39-1.475-.883-.788-1.48-1.761-1.653-2.059-.173-.297-.018-.458.13-.606.134-.133.298-.347.446-.52.149-.174.198-.298.298-.497.099-.198.05-.371-.025-.52-.075-.149-.669-1.612-.916-2.207-.242-.579-.487-.5-.669-.51-.173-.008-.371-.01-.57-.01-.198 0-.52.074-.792.372-.272.297-1.04 1.016-1.04 2.479 0 1.462 1.065 2.875 1.213 3.074.149.198 2.096 3.2 5.077 4.487.709.306 1.262.489 1.694.625.712.227 1.36.195 1.871.118.571-.085 1.758-.719 2.006-1.413.248-.694.248-1.289.173-1.413-.074-.124-.272-.198-.57-.347z" fill="#fff"/></svg>
<span class="t " style="left:528.00px;top:854.00px;font-size:16.00px;font-weight:400;color:#2b2b2b;letter-spacing:-0.017px;">Reply in Whatsapp</span>
<svg class="b" style="left:673.50px;top:856.50px;" width="11" height="11" viewBox="0 0 11 11" fill="none"><path d="M1.800 3.800L5.500 7.500l3.700-3.700" stroke="#2b2b2b" stroke-width="1.300" stroke-linecap="round" stroke-linejoin="round"/></svg>
<span class="t " style="left:501.50px;top:896.00px;font-size:16.00px;font-weight:400;color:#2b2b2b;letter-spacing:0.167px;">Duis fermentum sit amet nisi vitae venenatis.</span>
<span class="t " style="left:505.00px;top:999.00px;font-size:23.00px;font-weight:400;color:#3a3a3a;letter-spacing:-0.625px;font-family:'Liberation Serif',serif;">A</span>
<div class="b " style="left:541.00px;top:990.00px;width:40.00px;height:40.00px;border-radius:50%;background:#e8eefc"></div>
<svg class="b" style="left:550.00px;top:999.50px;" width="22" height="22" viewBox="0 0 22 22" fill="none"><circle cx="11" cy="11" r="9.300" stroke="#3f5bc4" stroke-width="1.250"/><circle cx="7.750" cy="9.050" r="1.050" fill="#3f5bc4"/><circle cx="14.250" cy="9.050" r="1.050" fill="#3f5bc4"/><path d="M6.800 14.100c1.100 1.400 2.600 2.100 4.200 2.100s3.100-.700 4.200-2.100" stroke="#3f5bc4" stroke-width="1.250" stroke-linecap="round"/></svg>
<svg class="b" style="left:598.00px;top:999.80px;" width="22" height="22" viewBox="0 0 22 22" fill="none"><path d="M19.300 9.700l-8.200 8.200a4.600 4.600 0 01-6.500-6.500l8.300-8.300a3.100 3.100 0 014.400 4.400l-8.300 8.300a1.550 1.550 0 01-2.200-2.200l7.700-7.700" stroke="#2b2b2b" stroke-width="1.300" stroke-linecap="round" stroke-linejoin="round"/></svg>
<svg class="b" style="left:648.00px;top:999.80px;" width="18" height="22" viewBox="0 0 18 22" fill="none"><rect x="1.700" y="4.400" width="14.600" height="16.200" rx="1.600" stroke="#2b2b2b" stroke-width="1.400"/><rect x="5.300" y="3" width="7.400" height="2.800" rx=".900" fill="#fff" stroke="#2b2b2b" stroke-width="1.200"/><path d="M7.500 3a1.500 1.500 0 013 0" stroke="#2b2b2b" stroke-width="1.200"/></svg>
<div class="b " style="left:1017.00px;top:990.00px;width:120.00px;height:40.00px;background:#fff;border:1px solid #dadada;border-radius:8px"></div>
<svg class="b" style="left:1038.00px;top:1002.50px;" width="15" height="15" viewBox="0 0 15 15" fill="none"><path d="M12.800 7.500a5.300 5.300 0 11-1.800-4" stroke="#2b2b2b" stroke-width="1.400" stroke-linecap="round"/><path d="M11.500 1v3h-3z" fill="#2b2b2b" stroke="#2b2b2b" stroke-width=".8" stroke-linejoin="round"/></svg>
<span class="t " style="left:1060.50px;top:1001.00px;font-size:16.50px;font-weight:400;color:#2b2b2b;letter-spacing:-0.122px;">Reset</span>
<div class="b " style="left:1149.00px;top:990.00px;width:120.00px;height:40.00px;background:#ffcb05;border-radius:8px"></div>
<svg class="b" style="left:1170.80px;top:1002.60px;" width="14.5" height="14.5" viewBox="0 0 14 14" fill="none"><path d="M13 1L.8 7.200l4 1.500L11 3.500 6.200 9.500v3.700l2-2.700 2.300 1.500z" fill="#2b2b2b"/></svg>
<span class="t " style="left:1194.00px;top:1001.00px;font-size:16.50px;font-weight:400;color:#2b2b2b;letter-spacing:-0.387px;">Send</span>
<span class="t " style="left:1334.50px;top:148.00px;font-size:18.00px;font-weight:700;color:#222;letter-spacing:-0.502px;">Profile</span>
<span class="t " style="left:1420.50px;top:148.00px;font-size:18.00px;font-weight:700;color:#222;letter-spacing:-0.129px;">Activity</span>
<span class="t " style="left:1517.50px;top:148.00px;font-size:18.00px;font-weight:700;color:#222;letter-spacing:-0.303px;">Notes</span>
<div class="b " style="left:1318.00px;top:181.00px;width:86.00px;height:4.00px;background:#ffcb05"></div>
<div class="b " style="left:1302.00px;top:185.00px;width:527.00px;height:1.00px;background:#dadada"></div>
<div class="b " style="left:1302.00px;top:273.00px;width:527.00px;height:1.00px;background:#dadada"></div>
<div class="b " style="left:1302.00px;top:361.00px;width:527.00px;height:1.00px;background:#dadada"></div>
<div class="b " style="left:1302.00px;top:449.00px;width:527.00px;height:1.00px;background:#dadada"></div>
<div class="b " style="left:1302.00px;top:537.00px;width:527.00px;height:1.00px;background:#dadada"></div>
<div class="b " style="left:1302.00px;top:625.00px;width:527.00px;height:1.00px;background:#dadada"></div>
<div class="b " style="left:1302.00px;top:730.00px;width:527.00px;height:1.00px;background:#dadada"></div>
<div class="b " style="left:1302.00px;top:825.00px;width:527.00px;height:1.00px;background:#dadada"></div>
<span class="t " style="left:1326.00px;top:212.00px;font-size:13.50px;font-weight:400;color:#777;letter-spacing:0.121px;">Name</span>
<span class="t " style="left:1326.00px;top:236.00px;font-size:15.60px;font-weight:700;color:#222;letter-spacing:-0.147px;">Magdelene Porter</span>
<span class="t " style="left:1326.00px;top:300.00px;font-size:13.50px;font-weight:400;color:#777;letter-spacing:0.266px;">Phone Number</span>
<span class="t " style="left:1354.50px;top:322.00px;font-size:15.60px;font-weight:700;color:#222;letter-spacing:0.808px;">+65 9049 3901</span>
<svg class="b" style="left:1326.00px;top:322.00px;" width="22" height="16" viewBox="0 0 22 16" fill="none"><rect x=".25" y=".25" width="21.500" height="15.500" fill="#fff" stroke="#e3e3e3" stroke-width=".5"/><rect width="22" height="8" fill="#ed2939"/><circle cx="5" cy="4" r="2.400" fill="#fff"/><circle cx="5.900" cy="4" r="2.100" fill="#ed2939"/><circle cx="7.300" cy="4" r="1.100" fill="#fff" opacity=".8"/></svg>
<span class="t " style="left:1326.00px;top:388.00px;font-size:13.50px;font-weight:400;color:#777;letter-spacing:-0.053px;">Email</span>
<span class="t " style="left:1326.00px;top:412.00px;font-size:15.60px;font-weight:700;color:#3f5bc4;letter-spacing:-0.257px;">magdelene.porter@gmail.com</span>
<span class="t " style="left:1326.00px;top:476.00px;font-size:13.50px;font-weight:400;color:#777;letter-spacing:0.317px;">Company</span>
<span class="t " style="left:1326.00px;top:500.00px;font-size:15.60px;font-weight:700;color:#222;letter-spacing:0.031px;">Nestle</span>
<span class="t " style="left:1326.00px;top:564.00px;font-size:13.50px;font-weight:400;color:#777;letter-spacing:0.330px;">Membership Tier</span>
<span class="t " style="left:1326.00px;top:588.00px;font-size:15.60px;font-weight:700;color:#222;letter-spacing:-0.319px;">Premium</span>
<span class="t " style="left:1326.00px;top:652.00px;font-size:13.50px;font-weight:400;color:#777;letter-spacing:0.123px;">Active Case ID</span>
<div class="b " style="left:1326.00px;top:674.00px;width:116.00px;height:32.00px;border-radius:16px;background:#e9f8f9"></div>
<span class="t " style="left:1334.00px;top:684.00px;font-size:16.00px;font-weight:400;color:#222;letter-spacing:1.052px;text-decoration:underline;text-underline-offset:2px;text-decoration-thickness:1px;text-decoration-color:#5f6b6b;-webkit-text-stroke:.35px #222;">9062184344</span>
<div class="b " style="left:1450.00px;top:674.00px;width:116.00px;height:32.00px;border-radius:16px;background:#e9f8f9"></div>
<span class="t " style="left:1458.00px;top:684.00px;font-size:16.00px;font-weight:400;color:#222;letter-spacing:1.052px;text-decoration:underline;text-underline-offset:2px;text-decoration-thickness:1px;text-decoration-color:#5f6b6b;-webkit-text-stroke:.35px #222;">4344906218</span>
<div class="b " style="left:1574.00px;top:674.00px;width:116.00px;height:32.00px;border-radius:16px;background:#fff1cc"></div>
<span class="t " style="left:1582.00px;top:684.00px;font-size:16.00px;font-weight:400;color:#222;letter-spacing:1.052px;text-decoration:underline;text-underline-offset:2px;text-decoration-thickness:1px;text-decoration-color:#5f6b6b;-webkit-text-stroke:.35px #222;">8434490621</span>
<span class="t " style="left:1702.00px;top:683.00px;font-size:12.00px;font-weight:400;color:#222;letter-spacing:-0.129px;">See more</span>
<span class="t " style="left:1326.00px;top:748.00px;font-size:13.50px;font-weight:400;color:#777;letter-spacing:0.592px;">Platform</span>
<div class="b " style="left:1326.00px;top:770.00px;width:40.00px;height:40.00px;border-radius:50%;background:#e3fbe6"></div>
<svg class="b" style="left:1337.00px;top:780.50px;" width="18" height="18" viewBox="0 0 24 24" fill="none"><path d="M.057 24l1.688-6.163A11.867 11.867 0 01.157 11.892C.16 5.335 5.495 0 12.05 0a11.817 11.817 0 018.413 3.488 11.824 11.824 0 013.48 8.414c-.003 6.557-5.338 11.892-11.893 11.892a11.9 11.9 0 01-5.688-1.448L.057 24z" fill="#5fb657"/><path d="M17.472 14.382c-.297-.149-1.758-.867-2.03-.967-.273-.099-.471-.148-.67.15-.197.297-.767.966-.94 1.164-.173.199-.347.223-.644.075-.297-.15-1.255-.463-2.39-1.475-.883-.788-1.48-1.761-1.653-2.059-.173-.297-.018-.458.13-.606.134-.133.298-.347.446-.52.149-.174.198-.298.298-.497.099-.198.05-.371-.025-.52-.075-.149-.669-1.612-.916-2.207-.242-.579-.487-.5-.669-.51-.173-.008-.371-.01-.57-.01-.198 0-.52.074-.792.372-.272.297-1.04 1.016-1.04 2.479 0 1.462 1.065 2.875 1.213 3.074.149.198 2.096 3.2 5.077 4.487.709.306 1.262.489 1.694.625.712.227 1.36.195 1.871.118.571-.085 1.758-.719 2.006-1.413.248-.694.248-1.289.173-1.413-.074-.124-.272-.198-.57-.347z" fill="#e3fbe6"/></svg>
<div class="b " style="left:1378.00px;top:770.00px;width:40.00px;height:40.00px;border-radius:50%;background:#fff5d6"></div>
<svg class="b" style="left:1388.00px;top:780.00px;" width="20" height="20" viewBox="0 0 24 24" fill="none"><path d="M6.62 10.79c1.44 2.83 3.76 5.14 6.59 6.59l2.2-2.2c.27-.27.67-.36 1.02-.24 1.12.37 2.33.57 3.57.57.55 0 1 .45 1 1V20c0 .55-.45 1-1 1-9.39 0-17-7.61-17-17 0-.55.45-1 1-1h3.5c.55 0 1 .45 1 1 0 1.25.2 2.45.57 3.57.11.35.03.74-.25 1.02l-2.2 2.2z" fill="#e0aa00"/></svg>
<div class="b " style="left:1430.00px;top:770.00px;width:40.00px;height:40.00px;border-radius:50%;background:#e5f5fd"></div>
<svg class="b" style="left:1439.00px;top:779.00px;" width="22" height="22" viewBox="0 0 24 24" fill="none"><rect x="2" y="4.500" width="20" height="15" rx="1.500" fill="#1a8fe3"/><path d="M3.500 7l8.500 6.500L20.500 7" stroke="#e5f5fd" stroke-width="1.500" stroke-linecap="round" stroke-linejoin="round"/></svg>
<div class="b " style="left:1813.00px;top:64.00px;width:32.00px;height:40.00px;border-radius:20px 0 0 20px;background:#050f3d"></div>
<svg class="b" style="left:1827.00px;top:78.00px;" width="12" height="12" viewBox="0 0 12 12" fill="none"><path d="M4 1.500L8.500 6 4 10.500" stroke="#fff" stroke-width="1.400" stroke-linecap="round" stroke-linejoin="round"/></svg>
</div>
</body></html>
